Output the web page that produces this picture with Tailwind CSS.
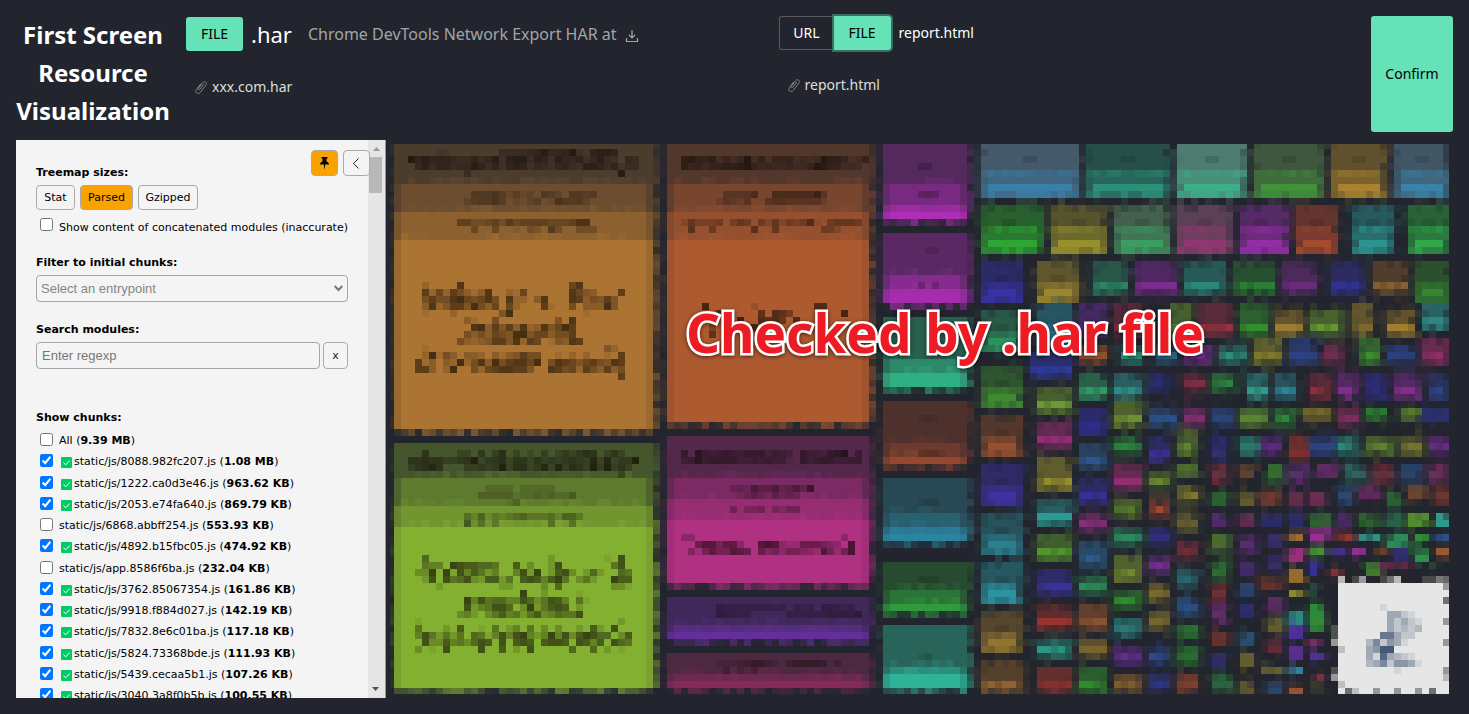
<!DOCTYPE html>
<html lang="en">
<head>
<meta charset="utf-8">
<title>First Screen Resource Visualization</title>
<script src="https://cdn.jsdelivr.net/npm/@tailwindcss/browser@4"></script>
</head>
<body class="bg-[#22252d]">
<div class="flex h-screen flex-col gap-2 overflow-hidden p-4 font-['Noto_Sans','Open_Sans',sans-serif] text-white">
  <header class="flex shrink-0 gap-4">
    <h1 class="w-[154px] shrink-0 text-center text-2xl leading-[38px] font-bold whitespace-nowrap">First Screen<br>Resource<br>Visualization</h1>
    <div class="flex flex-1 basis-0 flex-col gap-6">
      <div class="flex h-9 items-center">
        <button class="h-[34px] w-[57px] shrink-0 rounded-[3px] bg-[#65e2b7] text-sm text-black">FILE</button>
        <span class="ml-2 text-[22px] leading-8">.har</span>
        <span class="ml-4 text-base whitespace-nowrap text-[#a3a4a7]">Chrome DevTools Network Export HAR at</span>
        <a href="#" aria-label="Download" class="mt-1 ml-2 text-[#a3a4a7]"><svg class="size-[14px]" viewBox="0 0 14 14" fill="none" stroke="currentColor" stroke-width="1.2"><path d="M7 1v8M4 6l3 3 3-3M1.500 9v3.500h11V9"/></svg></a>
      </div>
      <div class="flex h-[22px] items-center gap-1 pl-2 text-sm text-[#dedede]">
        <svg class="h-4 w-[14px] text-[#85878b]" viewBox="0 0 14 16" fill="none" stroke="currentColor"><path d="M9.800 5.200L5.700 10.400c-.9 1.100-2.300.1-1.400-1.100L8.700 3.700c1.900-2.300 5 .1 3.200 2.500L6.400 13.200c-2.400 3-6.200.1-3.900-2.900L7 4.600"/></svg>
        <span>xxx.com.har</span>
      </div>
    </div>
    <div class="flex flex-1 basis-0 flex-col gap-6">
      <div class="flex h-[34px] items-center">
        <button class="h-[34px] w-[55px] rounded-l-[3px] border border-r-0 border-[#595b60] text-sm">URL</button>
        <button class="h-[34px] w-[57px] rounded-r-[3px] bg-[#65e2b7] text-sm text-black ring-2 ring-[#3b6f61]">FILE</button>
        <span class="ml-2 text-sm">report.html</span>
      </div>
      <div class="flex h-[22px] items-center gap-1 pl-2 text-sm text-[#dedede]">
        <svg class="h-4 w-[14px] text-[#85878b]" viewBox="0 0 14 16" fill="none" stroke="currentColor"><path d="M9.800 5.200L5.700 10.400c-.9 1.100-2.300.1-1.400-1.100L8.700 3.700c1.900-2.300 5 .1 3.200 2.500L6.400 13.200c-2.400 3-6.200.1-3.900-2.900L7 4.600"/></svg>
        <span>report.html</span>
      </div>
    </div>
    <button class="h-[116px] w-[82px] shrink-0 rounded-[3px] bg-[#65e2b7] text-sm text-black">Confirm</button>
  </header>

  <main class="flex min-h-0 flex-1">
    <aside class="relative flex w-[370px] shrink-0 overflow-hidden border-r border-[#999] bg-[#f4f4f4] font-['DejaVu_Sans',sans-serif] text-[11px] leading-[14px] text-black">
      <div class="flex-1 pt-[26px] pl-5 pr-5">
        <div class="absolute top-[10px] right-[15px] z-10 flex gap-[5px]">
          <button aria-label="Pin" class="flex h-[26px] w-[27px] items-center justify-center rounded-[4px] border border-[#aaa] bg-[#f9a200]"><svg class="h-[13px] w-[9px]" viewBox="0 0 9 13"><path d="M1.500 0h6v1.500H6.500v3C8.200 5 9 6 9 7.500H5.200L4.500 13 3.800 7.500H0C0 6 .8 5 2.500 4.500v-3h-1z"/></svg></button>
          <button aria-label="Collapse" class="flex h-[26px] w-[27px] items-center justify-center rounded-[4px] border border-[#aaa] bg-[#f4f4f4]"><svg class="mr-[2px] h-[11px] w-[6px]" viewBox="0 0 6 11" fill="none" stroke="#222"><path d="M5.500.5l-5 5 5 5"/></svg></button>
        </div>
        <h2 class="font-bold">Treemap sizes:</h2>
        <div class="mt-[5px] flex gap-[5px]">
          <button class="h-[25px] w-[39px] rounded-[4px] border border-[#aaa]">Stat</button>
          <button class="h-[25px] w-[53px] rounded-[4px] border border-[#aaa] bg-[#f9a200]">Parsed</button>
          <button class="h-[25px] w-[60px] rounded-[4px] border border-[#aaa]">Gzipped</button>
        </div>
        <label class="mt-2 flex gap-[6px] pl-1 whitespace-nowrap"><input type="checkbox" class="size-[13px] shrink-0"><span class="pt-[3px]">Show content of concatenated modules (inaccurate)</span></label>
        <label for="entry" class="mt-[21px] block font-bold">Filter to initial chunks:</label>
        <div class="relative mt-[5px] w-[312px]">
          <select id="entry" class="h-[27px] w-full appearance-none rounded-[4px] border border-[#a5a5a5] pl-1 font-['Liberation_Sans',sans-serif] text-[13px] text-[#858585]"><option>Select an entrypoint</option></select>
          <svg class="pointer-events-none absolute top-[10px] right-[5px] h-[7px] w-[9px]" viewBox="0 0 9 7" fill="none" stroke="#777" stroke-width="2"><path d="M.7 1l3.800 4 3.800-4"/></svg>
        </div>
        <label for="search" class="mt-[21px] block font-bold">Search modules:</label>
        <div class="mt-[5px] flex gap-[3px]">
          <input id="search" placeholder="Enter regexp" class="h-[27px] w-[284px] rounded-[4px] border border-[#a5a5a5] pl-[5px] font-['Liberation_Sans',sans-serif] text-[13px] placeholder:text-[#777]">
          <button class="h-[27px] w-[25px] rounded-[4px] border border-[#aaa] text-[#222]">x</button>
        </div>
        <h2 class="mt-[42px] font-bold">Show chunks:</h2>
        <div id="chunks" class="mt-[6px] flex h-[276px] flex-col justify-between"></div>
      </div>
      <div class="absolute top-0 right-0 bottom-0 w-[17px] bg-[#e6e6e6]" aria-hidden="true">
        <svg class="absolute top-[7px] left-[5px] h-1 w-[7px]" viewBox="0 0 7 4"><path fill="#999" d="M3.500 0L7 4H0z"/></svg>
        <div class="absolute top-[17px] left-[1px] h-9 w-[13px] bg-[#b8b8b8]"></div>
        <svg class="absolute bottom-[7px] left-[4px] h-1 w-[7px]" viewBox="0 0 7 4"><path fill="#505050" d="M0 0h7L3.500 4z"/></svg>
      </div>
    </aside>
    <section class="relative min-w-0 flex-1 p-1" aria-label="Treemap">
      <svg id="treemap" class="size-full" viewBox="3 2 1059 550" preserveAspectRatio="none" shape-rendering="crispEdges"></svg>
      <p class="absolute top-[157px] left-[300px] font-['Noto_Sans','Open_Sans',sans-serif] text-[53px] leading-[72px] font-bold whitespace-nowrap text-[#ed1c24] drop-shadow-[0_1px_2px_rgba(0,0,0,0.6)] [-webkit-text-stroke:5px_white] [paint-order:stroke_fill]">Checked by .har file</p>
    </section>
  </main>
</div>

<script>
const chunks = [
  ['All', '9.39 MB', 0], ['static/js/8088.982fc207.js', '1.08 MB', 1], ['static/js/1222.ca0d3e46.js', '963.62 KB', 1],
  ['static/js/2053.e74fa640.js', '869.79 KB', 1], ['static/js/6868.abbff254.js', '553.93 KB', 0], ['static/js/4892.b15fbc05.js', '474.92 KB', 1],
  ['static/js/app.8586f6ba.js', '232.04 KB', 0], ['static/js/3762.85067354.js', '161.86 KB', 1], ['static/js/9918.f884d027.js', '142.19 KB', 1],
  ['static/js/7832.8e6c01ba.js', '117.18 KB', 1], ['static/js/5824.73368bde.js', '111.93 KB', 1], ['static/js/5439.cecaa5b1.js', '107.26 KB', 1],
  ['static/js/3040.3a8f0b5b.js', '100.55 KB', 1]
];
const tick = '<svg class="mt-[5px] ml-[2px] mr-[2px] size-[11px] shrink-0" viewBox="0 0 11 11"><rect width="11" height="11" rx="1" fill="#0c6"/><path d="M2.500 5.500l2.200 2.300L8.700 3.500" fill="none" stroke="#fff"/></svg>';
document.getElementById('chunks').innerHTML = chunks.map(([name, size, on]) =>
  `<label class="flex h-[21px] shrink-0 pl-1 whitespace-nowrap"><input type="checkbox" ${on ? 'checked' : ''} class="mt-[2px] mr-[6px] size-[13px] shrink-0 accent-[#0075ff]">${on ? tick : ''}<span class="pt-[3px]">${name} (<b class="font-bold">${size}</b>)</span></label>`).join('');

// The treemap is a mosaic of 7px cells, addressed by column and row.
let out = '';
const px = c => Math.round(c * 6.992);
const rect = (c, r, w, h, fill, a = 1) => {
  if (a > 0.02) out += `<rect x="${px(c)}" y="${r * 7}" width="${px(c + w) - px(c)}" height="${h * 7}" fill="${fill}" fill-opacity="${a.toFixed(2)}"/>`;
};
const rnd = (a, b) => { const s = Math.sin(a * 12.9898 + b * 78.233) * 43758.5453; return s - Math.floor(s); };
const hex = h => [1, 3, 5].map(i => parseInt(h.slice(i, i + 2), 16));
const mix = (a, b, t) => { const A = hex(a), B = hex(b); return '#' + A.map((v, i) => Math.round(v + (B[i] - v) * t).toString(16).padStart(2, '0')).join(''); };
const sides = (c0, c1, r0, r1, fill, lo = 0, hi = 0.4) => {
  for (let r = r0; r < r1; r++) {
    rect(c0 - 1, r, 1, 1, fill, rnd(c0, r) * 0.35);
    rect(c1, r, 1, 1, fill, lo + rnd(c1, r) * (hi - lo));
  }
};
const fringe = (c0, c1, r, fill, lo = 0.15, hi = 0.6) => { for (let c = c0; c < c1; c++) rect(c, r, 1, 1, fill, lo + rnd(c, r) * (hi - lo)); };

// Tile with colour bands: [startRow, colour]; each band nests one cell inside the previous one.
const banded = (c0, c1, end, bands) => bands.forEach(([r, fill], i) => {
  const stop = i + 1 < bands.length ? bands[i + 1][0] : end;
  const inset = i > 0 ? 1 : 0;
  rect(c0, r, c1 - c0, stop - r, mix(bands[Math.max(0, i - 1)][1], fill, 0.4));
  rect(c0 + inset, r, c1 - c0 - inset * 2, stop - r, fill);
  if (i) fringe(c0 + 1, c1 - 1, r - 1, fill, -0.2, 0.45);
  sides(c0, c1, r, stop, mix(bands[0][1], fill, 0.3), 0.2, 1);
  if (i + 1 === bands.length) fringe(c0, c1, end, fill, 0.05, 0.65);
});
banded(1, 38, 41, [[0, '#4c3c2e'], [6, '#6c4d2f'], [10, '#8c612f'], [14, '#ac7432']]);
banded(1, 38, 78, [[43, '#45562d'], [48, '#5e7a2e'], [52, '#71952f'], [55, '#84b032']]);
banded(40, 69, 40, [[0, '#52372d'], [6, '#78462f'], [10, '#94502f'], [14, '#ae5a30']]);
banded(40, 69, 63, [[42, '#53284a'], [48, '#7b2a63'], [51, '#962d72'], [54, '#b03082']]);
banded(40, 69, 71, [[65, '#41285a'], [69, '#532d7e'], [70, '#642f98']]);
banded(40, 69, 78, [[73, '#4d2841'], [76, '#6a2a50'], [77, '#84295a']]);
banded(71, 83, 11, [[0, '#542a5d'], [6, '#782a80'], [9, '#952c9b'], [10, '#ac2fb5']]);
banded(71, 83, 23, [[13, '#5a2963'], [19, '#842b8d'], [21, '#a42dae']]);
banded(71, 83, 35, [[25, '#286150'], [31, '#2c8a6b'], [33, '#30b082']]);
banded(71, 83, 46, [[37, '#4e302d'], [43, '#6c3b2f'], [45, '#95482f']]);
banded(71, 83, 57, [[48, '#284954'], [53, '#27606f'], [55, '#2b7890'], [56, '#2b84a0']]);
banded(71, 83, 67, [[60, '#264b30'], [64, '#2a7437'], [66, '#2f9b3e']]);
banded(71, 83, 78, [[69, '#286459'], [75, '#2b8d7b'], [76, '#30b299']]);

// Small tiles: col row endCol endRow base highlight
const tiles = `85 0 99 8 44596a 397fa8|100 0 112 8 264f4a 2c8f78|113 0 123 8 4f7c70 3cae88|124 0 134 8 3f573f 40923a|135 0 143 8 61502d a88230|144 0 152 8 425766 3982a8
85 9 94 16 28602e 2da634|95 9 103 16 57542d 97902d|104 9 112 16 44604f 3a9e60|113 9 121 16 5c4156 8f3870|122 9 129 16 562a66 942ea6|130 9 136 16 63352e a84a30|138 9 144 16 275a5c 2b9490|146 9 152 16 286338 30a84a
85 17 91 23 2b2b66 3832a8|93 17 99 23 60562d 9b852e|101 17 106 22 285648 2b8765|107 17 113 22 502861 802d93|114 17 120 22 275a57 2c8d7c|121 17 127 22 265030 2b8036|128 17 133 22 4c2a5c 6d2c80|135 17 140 22 2c2c62 33319a|141 17 146 22 503d2c 8a6431|147 17 152 23 2b502d 35862f
85 24 91 30 285a48 2b9260|93 23 98 29 275562 2c7390|99 23 103 28 462864 692c90|104 23 108 28 552a38 7d2c38|112 23 115 28 476030 5f9030|116 23 121 28 5a2c3a a03040|122 23 126 28 2b602f 35922f|127 24 131 28 63552d a28030|132 24 137 28 48622e 689c30|138 23 141 28 63562d 7b6a2f|143 24 147 28 62532d a8802f|148 23 152 27 286365 30a09a
92 30 98 34 29306c 2d3ca0|99 29 103 32 6b4030 a05a30|105 29 108 32 28685c 30a080|110 29 113 32 284f6b 2d6688|114 29 118 32 542a68 7a2ea0|119 29 123 32 285a55 2c8f7a|124 28 128 32 5d602d 7f7a2d|129 28 133 32 293a6c 2d4588|134 29 137 32 652b4a 802e55|139 28 142 32 326530 409030|143 29 147 32 293a6c 2d4588|148 28 152 32 6c2a50 952e68
85 32 91 38 2f5430 3f8a30|93 35 98 39 486030 70a030|99 33 103 37 286048 30a068|104 33 108 37 286062 2c8f8a|109 33 112 36 292b68 2d2f7c|114 33 117 36 6b2b40 802e42|118 33 121 36 286038 309a48|123 33 126 37 286462 30a08a|127 33 130 37 28525c 2c8aa0|132 33 135 37 5a2a38 90303c|136 33 139 37 562a66 842e90|140 33 143 37 2b2b70 2e2e80|144 33 148 37 552a66 8a2e90|149 33 152 37 293560 2d4588
99 38 103 42 2b2b6c 3030a0|104 37 108 41 4f622e 6f942f|109 38 113 41 283f66 2a5690|114 38 117 41 602b5a 8a2e78|118 38 121 41 283a66 2a4c80|122 38 126 41 486a30 60902f|127 38 130 41 286830 2d8c38|131 38 135 40 58502d 88782d|136 38 139 41 602b4a 8a2e68|140 38 143 40 286330 2d8c38|145 38 148 40 485c30 5f9030|148 38 152 40 29306a 29306a
85 39 91 45 54382d 955030|85 46 91 52 2f2b68 3f32a0|85 53 91 59 27525c 2b8090|85 60 91 66 275862 2b94a0|85 67 91 73 55472d 90742f|85 74 91 79 54402d 96652f
93 40 98 44 642b55 9a2e78|93 45 98 50 5f5c2d 98902d|93 51 98 55 286062 2ca09a|93 56 98 60 3f602e 559a2f|93 61 98 65 2d2b68 3d30a0|93 66 98 70 5f2c2d a03530|93 71 98 74 286860 2b9a85|93 75 98 79 642f2d 8c302d
99 43 103 47 284260 2d5890|99 48 103 52 2b2b65 3a309a|99 53 103 56 602b58 90308a|99 57 103 61 284a66 2c5f95|99 62 103 65 286045 2c8f58|99 66 103 70 633f2d 8f5530|99 71 103 74 5c4f2d 9a7d2f|99 75 103 79 2a602d 2f8f2f
104 42 108 45 286038 2c923f|104 46 108 50 652b50 982e72|104 51 108 54 485c2d 5f8a2f|104 55 108 58 286450 2c8a60|104 59 108 63 50602e 7a8a2e|104 64 108 67 2a602d 309030|104 68 108 71 286062 2b8080|104 72 108 75 482868 602f90|104 76 108 79 60482d 8f6530
109 42 112 46 2d2b65 3d3095|109 47 112 50 48602e 6a8a2e|109 51 112 54 633430 a04a30|109 55 112 58 2b2b65 362f90|109 59 112 62 4f2b68 702f90|109 63 112 66 5c542d 9a802f|109 67 112 70 5c542d 8f7a2e|109 72 112 75 283866 2d4a88|109 76 112 79 2b2f68 2d3890
113 41 116 45 485c2e 60882e|113 46 116 48 486030 5a7c2e|113 49 116 52 5a5a2d 88802d|113 53 116 56 575230 6b622d|113 57 116 60 602b38 702c3a|113 61 116 64 285860 2b6870|113 65 116 68 284570 2c5890|113 69 116 71 28602f 2b7a38|113 72 116 75 28602f 2b7a38|113 76 116 79 6b382d 8f4a2f
118 42 120 46 2b2b68|122 42 125 45 286860 2b8070|125 42 128 45 4b2868 5a2c80|129 42 132 46 6b2f2d 8a302d|132 42 136 45 29386b 2d4588|136 42 139 45 286860 2b9080|140 42 144 45 48602e 5f8a2e|145 42 148 45 585c2d 7a7a2d|149 42 152 45 502868 6c2c90
118 46 120 49 642b3a|122 46 124 48 63402d|126 46 128 49 336b2e|129 46 132 49 55286a|133 46 136 48 602860|137 46 140 49 28605a|141 46 144 49 602a38|145 46 148 49 283f66|149 46 152 49 642a58
118 50 120 52 28602f|122 50 124 52 605a2d|125 50 128 52 6b382d|129 50 131 52 602a48|132 50 134 52 682a50|136 49 138 52 28426b|139 49 142 51 602858|143 50 145 52 28602f|146 49 149 51 6b452d|150 49 152 52 68302d
118 53 120 55 502868|122 53 124 55 602a50|125 53 128 55 292b65|129 53 131 55 292b65|132 53 135 55 2d602f|136 53 138 55 462860|139 53 142 55 2d602f|143 53 145 55 286048|146 53 149 55 4f8a2e|150 53 152 55 2b9a8a
118 56 121 59 486a2e|122 56 124 59 502868|126 56 128 58 352b65|129 56 131 57 a06a30|132 55 135 57 9a2e90|136 56 138 57 98302d|139 56 142 57 2c9488|143 56 146 58 2c8a58|147 56 149 57 2d9030|150 56 152 57 2c559a
118 60 120 63 28682f|122 60 124 62 402868|126 59 128 62 352860|129 58 131 60 9a2e7a|132 58 134 59 409030|135 58 137 59 4a2f98|138 58 140 59 8a2e90|142 58 143 59 955028|144 58 146 60 2b2b70|147 58 149 60 2c9048|150 58 152 59 9a5530
129 61 131 63 946c2e|132 60 133 62 362f98|135 61 136 62 98302f|140 60 142 62 3f7a2e|142 60 146 61 5c2848|149 60 150 61 28403a
118 63 120 66 6b2c2d|122 63 124 65 283f68|125 62 128 64 68302d|129 64 131 65 8a8a2d|132 63 133 65 28403a|118 66 120 69 5c2860|122 66 124 68 2b2b68|126 65 128 67 5a2860|126 68 128 70 605c2d|129 67 131 69 2c8a80|132 66 134 70 2d8a38
118 70 120 72 682f2d|122 70 124 72 284a6b|126 71 128 73 642a35|129 69 131 71 4a2f95|132 71 133 72 9a2e78|129 72 131 74 5a2c90|132 73 134 74 4f2f95|118 73 120 75 2f2b65|122 73 124 75 605c2d|125 75 128 76 605f2d|129 75 131 76 2c8098|133 76 134 77 98304a|118 76 121 79 28603a|122 77 124 79 5c542d|126 77 128 79 28456b|129 78 131 79 985030|132 77 134 79 33352c`;
tiles.split(/[|\n]/).forEach(t => {
  const p = t.trim().split(' '), [c0, r0, c1, r1] = p.map(Number), base = '#' + p[4], hi = p[5] ? '#' + p[5] : mix(base, '#888888', 0.08);
  const h = r1 - r0, w = c1 - c0;
  sides(c0, c1, r0, r1, base, -0.1, 0.45);
  fringe(c0, c1, r1, base, -0.3, 0.35);
  if (r0) fringe(c0, c1, r0 - 1, base, -0.3, 0.35);
  rect(c0, r0, w, h, base);
  if (h >= 6) {
    const b = r1 - (h > 6 ? 4 : 3);
    rect(c0, b, w, r1 - b, mix(base, hi, 0.35));
    rect(c0 + 1, r1 - 2, w - 2, 1, hi);
    for (let c = c0; c < c1; c++) rect(c, r1 - 1, 1, 1, hi, rnd(c, r1) > 0.5 ? 0.8 : 0.25);
    for (let c = c0 + 1; c < c1 - 1; c++) rect(c, b, 1, 1, hi, rnd(c, b) * 0.5);
    if (w > 5) rect(c0 + (w >> 1) - 1, r0 + 2, 2, 1, '#111', 0.15);
  } else if (h >= 4) {
    rect(c0, r1 - 2, w, 2, mix(base, hi, 0.4));
    for (let c = c0; c < c1; c++) rect(c, r1 - 2, 1, 1, hi, rnd(c, r0) > 0.35 ? 0.85 : 0.3);
    for (let c = c0; c < c1; c++) rect(c, r1 - 1, 1, 1, '#22252d', rnd(c, r1) * 0.6);
  } else {
    for (let c = c0; c < c1; c++) rect(c, r1 - Math.min(2, h), 1, 1, hi, 0.3 + rnd(c, r0) * 0.7);
    if (h > 2) for (let c = c0; c < c1; c++) rect(c, r1 - 1, 1, 1, '#22252d', rnd(c, r1) * 0.6);
  }
  // Uneven outline: edge cells fade into the background
  if (w > 2) for (let r = r0; r < r1; r++) {
    rect(c1 - 1, r, 1, 1, '#22252d', rnd(c1 + 3, r) * 0.9 - 0.35);
    rect(c0, r, 1, 1, '#22252d', rnd(c0 + 7, r) * 0.6 - 0.35);
  }
  if (r0) fringe(c0, c1, r0, '#22252d', -0.4, 0.45);
});

// Pixelated labels: row, first column, darkness digits
const glyphs = (fill, unit, list) => list.forEach(([r, c, s]) => [...s].forEach((d, i) => d !== '.' && rect(c + i, r, 1, 1, fill, d * unit)));
glyphs('#0c0702', 0.07, [
  [1, 7, '21.......44445685569316776'], [2, 3, '968666544645837884763755635743.54'], [3, 4, '57466455864636763543564377646244'], [4, 11, '4'], [4, 33, '8'],
  [7, 12, '444531312.432.4434'], [8, 11, '234453.1.23.154342'], [11, 10, '5533453645555444577'], [12, 12, '4..4..1.32.63..333'],
  [20, 5, '2....8...............68'], [21, 5, '7262753138..216......8643...7'], [22, 5, '57558965685.822.38...8735474'],
  [23, 5, '38247749536.62...71..5.33394'], [24, 5, '1...2......49..........1'], [25, 11, '31..5........4.8'],
  [26, 12, '893747382384697'], [27, 11, '5353654994663557'], [28, 10, '532347748276.14387'], [29, 5, '1'], [29, 31, '42'],
  [30, 5, '29153.332.3134755..1.2.2..1.7'], [31, 4, '713.32925839578869.58764675487'], [32, 4, '773.29..526788774..87562753735'], [33, 33, '7'],
  [44, 5, '6....33.5.47.3.2.4.353576.363'], [45, 3, '667664456935673663645456548383559'], [46, 3, '46786...445459377358384764949464'], [47, 33, '5'],
  [49, 14, '2222.22222'], [50, 13, '33333122323224'], [51, 17, '23'], [53, 11, '42513234533342553'], [54, 11, '614.3.......4..4'],
  [59, 5, '6.................2.......1.8'], [60, 5, '544.9877665..7.3..28.......58'], [61, 4, '339.91847524..4829.2783.262..65'],
  [62, 5, '28.8568327725.7874795.352..977'], [63, 7, '2........22....3.6.......331'], [64, 19, '9..2....1'],
  [65, 11, '948566448635874.51'], [66, 11, '8245886.3925787.2'], [67, 10, '342.35745257346558'], [68, 4, '1............................2'],
  [69, 4, '5...2.7..1.5.24.5.3.3..2.72.8'], [70, 4, '4852525.65148489424948379866.37'], [71, 5, '8337453687.8.787.7887.8747.865'], [72, 4, '3.1.8....8..7.2.8.....6..6.2.1'],
  [2, 42, '786673535936255634349775236'], [3, 42, '75646677896454454469866343'], [7, 48, '44446..66666684'], [8, 47, '24324..455444442'],
  [11, 42, '253334.354.425243471.45554'], [12, 43, '6..4.....6..5......442'],
  [23, 45, '9......2........88'], [24, 45, '2.88....7.875....7..9'], [25, 50, '9..8786.8'], [26, 46, '4..9899'], [27, 46, '7'],
  [44, 42, '6.85456546663543.6443679.5'], [45, 42, '4585666644545441.645664455'], [49, 49, '332644634638'], [50, 50, '234324232'],
  [52, 49, '4.334.3244'], [56, 42, '33.....................3'], [57, 44, '6885773..898322666543.9'], [58, 43, '415755876.64535543285259'],
  [66, 46, '.4333333323.323.44323'], [67, 46, '.54333.....33333344445'], [74, 47, '222335532.355554.3'], [75, 48, '3.2.3'],
  [3, 76, '33'], [7, 76, '343'], [15, 77, '22'], [20, 76, '3.3'], [39, 76, '121'], [44, 76, '3332'], [51, 76, '122'], [62, 76, '222'], [73, 76, '12']
]);

// Pixelated logo card
rect(136, 62, 16, 1, '#22252d');
rect(136, 63, 16, 16, '#e6e6e6');
[[136, 62, 'b8'], [138, 62, '48'], [139, 62, '98'], [142, 62, '48'], [143, 62, '70'], [144, 62, 'b8'], [148, 62, '48'], [149, 62, '48'], [150, 62, '78'], [151, 62, '68'],
 [151, 63, '98'], [151, 65, '70'], [151, 68, '98'], [151, 71, '98'], [151, 75, '98'], [151, 76, 'b8'], [135, 69, '50'], [135, 70, '50'], [135, 71, '98'], [136, 72, 'c0'],
 [135, 75, '50'], [135, 76, '98'], [136, 77, 'c0'], [137, 78, '70'], [138, 78, 'c0'], [141, 78, '98'], [144, 78, '98'], [147, 78, '98'], [149, 78, '70']
].forEach(([c, r, g]) => rect(c, r, 1, 1, '#' + g + g + g));
glyphs('#445877', 0.111, [[66, 142, '1'], [67, 143, '4421'], [68, 143, '42421'], [69, 143, '42323'], [70, 142, '77422'], [71, 140, '362541'], [72, 140, '4599'], [73, 140, '4184321'], [74, 140, '34625541'], [75, 144, '1']]);

document.getElementById('treemap').innerHTML = out;
</script>
</body>
</html>
